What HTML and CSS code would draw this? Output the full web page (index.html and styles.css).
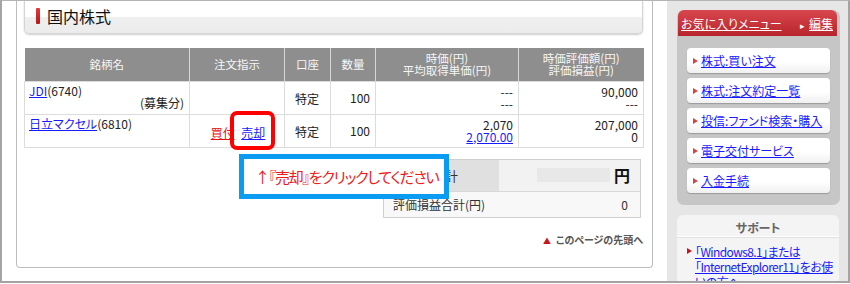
FILE: index.html
```html
<!DOCTYPE html>
<html lang="ja">
<head>
    <meta charset="UTF-8">
    <title>国内株式</title>
    <link rel="stylesheet" href="styles.css">
</head>
<body>
    <div class="frame">
        <div class="main">
            <div class="panel">
                <div class="heading">
                    <span class="heading-bar"></span>
                    <h2>国内株式</h2>
                </div>

                <table class="holdings">
                    <colgroup>
                        <col style="width: 165px">
                        <col style="width: 95px">
                        <col style="width: 46px">
                        <col style="width: 45px">
                        <col style="width: 143px">
                        <col style="width: 125px">
                    </colgroup>
                    <thead>
                        <tr>
                            <th>銘柄名</th>
                            <th>注文指示</th>
                            <th>口座</th>
                            <th>数量</th>
                            <th>時価(円)<br>平均取得単価(円)</th>
                            <th>時価評価額(円)<br>評価損益(円)</th>
                        </tr>
                    </thead>
                    <tbody>
                        <tr>
                            <td class="name"><a href="#">JDI</a>(6740)<span class="note">(募集分)</span></td>
                            <td></td>
                            <td class="center">特定</td>
                            <td class="num">100</td>
                            <td class="num">---<br>---</td>
                            <td class="num">90,000<br>---</td>
                        </tr>
                        <tr>
                            <td class="name"><a href="#">日立マクセル</a>(6810)</td>
                            <td class="order">
                                <a href="#" class="buy">買付</a>
                                <a href="#" class="sell">売却</a>
                            </td>
                            <td class="center">特定</td>
                            <td class="num">100</td>
                            <td class="num">2,070<br><a href="#">2,070.00</a></td>
                            <td class="num">207,000<br>0</td>
                        </tr>
                    </tbody>
                </table>

                <div class="summary">
                    <div class="summary-row total">
                        <div class="summary-label">評価額合計</div>
                        <div class="summary-value"><span class="masked"></span>円</div>
                    </div>
                    <div class="summary-row">
                        <div class="summary-label">評価損益合計(円)</div>
                        <div class="summary-value">0</div>
                    </div>
                </div>

                <div class="pagetop"><a href="#">このページの先頭へ</a></div>
            </div>
        </div>

        <div class="side">
            <div class="fav">
                <div class="fav-head">
                    <a href="#">お気に入りメニュー</a>
                    <a href="#" class="edit">編集</a>
                </div>
                <ul class="fav-list">
                    <li><a href="#">株式:買い注文</a></li>
                    <li><a href="#">株式:注文約定一覧</a></li>
                    <li><a href="#">投信:ファンド検索・購入</a></li>
                    <li><a href="#">電子交付サービス</a></li>
                    <li><a href="#">入金手続</a></li>
                </ul>
            </div>

            <div class="support">
                <h3>サポート</h3>
                <ul>
                    <li><a href="#">「Windows8.1」または<br>「InternetExplorer11」をお使<br>いの方へ</a></li>
                </ul>
            </div>
        </div>

        <!-- annotation -->
        <div class="callout">↑『売却』をクリックしてください</div>
    </div>
</body>
</html>
```

FILE: styles.css
```css
/* Base styles */
* {
    box-sizing: border-box;
}

body {
    margin: 0;
    width: 850px;
    height: 284px;
    overflow: hidden;
    background: #fff;
    font-family: 'Noto Sans CJK JP', sans-serif;
    font-size: 12px;
    font-feature-settings: "palt";
    color: #222;
}

a {
    color: #1a1aff;
}

.frame {
    position: relative;
    display: flex;
    width: 850px;
    height: 283px;
    border: 2px solid #a4a4a4;
    border-top: 1px solid #b4b4b4;
    overflow: hidden;
}

/* Main column */
.main {
    width: 665px;
    padding-left: 14px;
}

.panel {
    width: 637px;
    height: 267px;
    border: 1px solid #bdbdbd;
    border-top: none;
    border-radius: 0 0 4px 4px;
    padding: 0 9px 0 7px;
}

.heading {
    display: flex;
    align-items: center;
    height: 33px;
    padding-left: 11px;
    border: 1px solid #d4d4d4;
    border-top: none;
    border-radius: 0 0 5px 5px;
    background: linear-gradient(#fff 0, #fff 48%, #efefef 52%, #ececec 100%);
    box-shadow: 0 1px 2px #d0d0d0;
}

.heading-bar {
    width: 4px;
    height: 16px;
    margin-top: -2px;
    background: linear-gradient(#e23b3b, #b8161c);
    border-radius: 1px;
}

.heading h2 {
    margin: -2px 0 0 7px;
    font-size: 16px;
    font-weight: normal;
    color: #111;
}

/* Holdings table */
.holdings {
    width: 619px;
    margin-top: 14px;
    border-collapse: collapse;
    table-layout: fixed;
}

.holdings th {
    height: 33px;
    padding: 0;
    background: #8e8e8e;
    color: #f6f6f6;
    font-weight: normal;
    font-size: 11.5px;
    line-height: 12px;
    border-left: 1px solid #d6d6d6;
}

.holdings th:first-child {
    border-left: none;
}

.holdings td {
    height: 33px;
    padding: 3px 5px 3px 4px;
    border: 1px solid #dcdcdc;
    line-height: 12px;
    vertical-align: top;
}

.holdings td.center {
    text-align: center;
    vertical-align: middle;
    padding-top: 6px;
}

.holdings td.num {
    text-align: right;
    vertical-align: middle;
}

.holdings td.name {
    padding-left: 4px;
}

.note {
    display: block;
    text-align: right;
}

.holdings td.order {
    text-align: center;
    vertical-align: middle;
    padding: 5px 0 0 2px;
}

.order a {
    margin: 0 2px;
}

.order .buy {
    color: #e41010;
}

.order .sell {
    position: relative;
}

/* red box round 売却 */
.order .sell::after {
    content: '';
    position: absolute;
    left: -11px;
    right: -10px;
    top: -13px;
    bottom: -9px;
    border: 4px solid #f00;
    border-radius: 7px;
}

/* Summary box */
.summary {
    width: 258px;
    margin: 11px 2px 0 auto;
    border: 1px solid #cfcfcf;
}

.summary-row {
    display: flex;
    height: 25px;
    align-items: center;
    background: #f8f8f8;
    color: #333;
}

.summary-row.total {
    height: 32px;
    border-bottom: 1px solid #d8d8d8;
    background: #f2f2f2;
}

.summary-label {
    width: 115px;
    padding-left: 9px;
}

.summary-row.total .summary-label {
    height: 100%;
    display: flex;
    align-items: center;
    background: #e0e0e0;
    font-size: 13px;
}

.summary-value {
    flex: 1;
    display: flex;
    justify-content: flex-end;
    align-items: center;
    padding-right: 12px;
}

.summary-row.total .summary-value {
    font-size: 16px;
    font-weight: bold;
    color: #111;
    padding-right: 10px;
}

.masked {
    width: 73px;
    height: 14px;
    margin-right: 4px;
    background: #e8e8e8;
}

.pagetop {
    margin-top: 14px;
    text-align: right;
    font-size: 10px;
    font-weight: bold;
}

.pagetop a {
    color: #555;
    text-decoration: none;
}

.pagetop a::before {
    content: '▲';
    margin-right: 5px;
    font-size: 8px;
    color: #c8141e;
}

/* Side column */
.side {
    flex: 1;
    padding: 9px 6px 0 10px;
    background: #e6e6e6;
}

.fav {
    width: 163px;
    border-radius: 7px;
    background: #c6c6c6;
    padding-bottom: 12px;
}

.fav-head {
    display: flex;
    justify-content: space-between;
    align-items: center;
    height: 26px;
    margin: 0 3px 0 1px;
    padding: 0 4px 0 3px;
    border-radius: 6px 6px 0 0;
    background: linear-gradient(#d9474e, #b8242b);
}

.fav-head a {
    color: #fff;
    font-size: 12px;
    white-space: nowrap;
}

.fav-head .edit::before {
    content: '▸';
    display: inline-block;
    margin-right: 4px;
    text-decoration: none;
    font-size: 9px;
}

.fav-list {
    margin: 0;
    padding: 12px 10px 0;
    list-style: none;
    display: flex;
    flex-direction: column;
    gap: 5px;
}

.fav-list li {
    height: 25px;
    display: flex;
    align-items: center;
    padding-left: 6px;
    border-radius: 4px;
    background: linear-gradient(#fff, #fff 55%, #f0f0f0);
    box-shadow: 0 1px 1px #9a9a9a;
}

.fav-list li::before {
    content: '';
    margin-right: 3px;
    border-left: 5px solid #d24646;
    border-top: 3.5px solid transparent;
    border-bottom: 3.5px solid transparent;
}

.fav-list a {
    font-size: 12px;
    white-space: nowrap;
}

.support {
    width: 162px;
    margin-top: 10px;
    height: 80px;
    border-radius: 6px 6px 0 0;
    background: #f4f4f4;
}

.support h3 {
    margin: 0;
    height: 22px;
    line-height: 26px;
    text-align: center;
    font-size: 12px;
    color: #666;
    border-bottom: 1px solid #fff;
    box-shadow: 0 1px 0 #e0e0e0;
}

.support ul {
    margin: 0;
    padding: 7px 0 0 18px;
    list-style: none;
}

.support li {
    position: relative;
    line-height: 15px;
    letter-spacing: -0.6px;
    white-space: nowrap;
}

.support li::before {
    content: '';
    position: absolute;
    left: -8px;
    top: 4px;
    border-left: 5px solid #c8141e;
    border-top: 3.5px solid transparent;
    border-bottom: 3.5px solid transparent;
}

/* Annotation over the table */
.callout {
    position: absolute;
    left: 237px;
    top: 153px;
    width: 210px;
    height: 45px;
    display: flex;
    align-items: center;
    padding-left: 11px;
    border: 5px solid #0a9cf2;
    background: #fff;
    color: #f01818;
    font-size: 15px;
    letter-spacing: -1.25px;
    white-space: nowrap;
}
```
